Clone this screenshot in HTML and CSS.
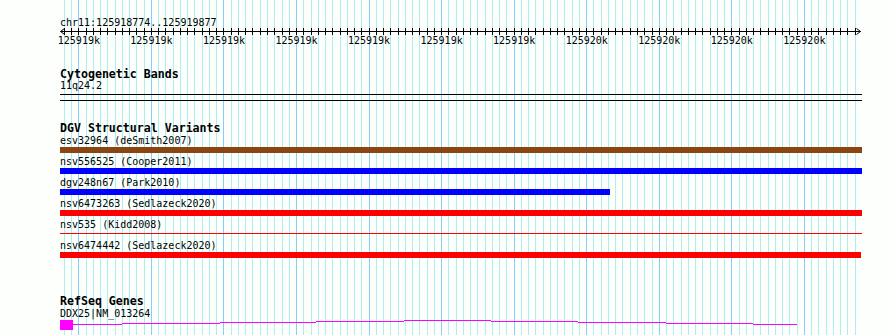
FILE: index.html
```html
<!DOCTYPE html>
<html lang="en">
<head>
  <meta charset="UTF-8">
  <meta name="viewport" content="width=device-width, initial-scale=1.0">
  <title>chr11:125918774..125919877</title>
  <link rel="stylesheet" href="styles.css">
</head>
<body>
  <div class="browser">
    <svg class="grid" id="grid" width="890" height="335"></svg>
    <div class="tracks">
      <div class="locus">chr11:125918774..125919877</div>
      <svg class="ruler" id="ruler" width="802" height="20"></svg>

      <div class="track">
        <h2 class="track-title cyto-title">Cytogenetic Bands</h2>
        <div class="band-label">11q24.2</div>
        <div class="band"></div>
      </div>

      <div class="track">
        <h2 class="track-title dgv-title">DGV Structural Variants</h2>
        <div class="sv">
          <div class="sv-label">esv32964 (deSmith2007)</div>
          <div class="bar brown"></div>
        </div>
        <div class="sv">
          <div class="sv-label">nsv556525 (Cooper2011)</div>
          <div class="bar blue"></div>
        </div>
        <div class="sv">
          <div class="sv-label">dgv248n67 (Park2010)</div>
          <div class="bar blue" style="width: 550px"></div>
        </div>
        <div class="sv">
          <div class="sv-label">nsv6473263 (Sedlazeck2020)</div>
          <div class="bar red"></div>
        </div>
        <div class="sv">
          <div class="sv-label">nsv535 (Kidd2008)</div>
          <div class="bar thin"></div>
        </div>
        <div class="sv">
          <div class="sv-label">nsv6474442 (Sedlazeck2020)</div>
          <div class="bar red" style="width: 801px"></div>
        </div>
      </div>

      <div class="track">
        <h2 class="track-title gene-title">RefSeq Genes</h2>
        <div class="gene-label">DDX25|NM_013264</div>
        <svg class="gene" width="802" height="16">
          <rect x="0" y="1" width="13" height="10" fill="#ff00ff"></rect>
          <path d="M13 5.5H62M62 4.5H160M160 3.5H256M256 2.5H344M344 1.5H431M431 2.5H518M518 3.5H606M606 4.5H693M693 5.5H737" stroke="#ff00ff" stroke-width="1" fill="none"></path>
        </svg>
      </div>
    </div>
  </div>
  <script>
    (function () {
      // 60px = 125918774, 0.7255 px per bp
      var start = 125918774, x0 = 60, scale = 0.7255;
      var ns = 'http://www.w3.org/2000/svg';
      var grid = document.getElementById('grid');
      var ruler = document.getElementById('ruler');

      function px(bp) {
        return x0 + (bp - start) * scale;
      }
      function el(parent, name, attrs) {
        var node = document.createElementNS(ns, name);
        for (var k in attrs) node.setAttribute(k, attrs[k]);
        parent.appendChild(node);
        return node;
      }

      // axis + arrows (ruler svg starts at x=60)
      el(ruler, 'path', {
        d: 'M0.5 3.5H800.5M4.5 0.5L0.5 3.5L4.5 6.5M796.5 0.5L800.5 3.5L796.5 6.5',
        stroke: '#000', fill: 'none'
      });

      for (var bp = 125918780; bp <= 125919870; bp += 10) {
        var x = Math.floor(px(bp)) + 0.5;
        var major = bp % 100 === 0;
        el(grid, 'line', {
          x1: x, x2: x, y1: 0, y2: 335,
          stroke: major ? '#87cefa' : '#afeeee'
        });
        el(ruler, 'line', { x1: x - x0, x2: x - x0, y1: 0, y2: 7, stroke: '#000' });
        if (major) {
          var t = el(ruler, 'text', { x: px(bp) - x0, y: 16, 'text-anchor': 'middle' });
          t.textContent = Math.round(bp / 1000) + 'k';
        }
      }
    })();
  </script>
</body>
</html>
```

FILE: styles.css
```css
body {
  margin: 0;
  background: #fcfffc;
  font-family: "DejaVu Sans Mono", monospace;
  font-size: 10px;
  color: #000;
}
.browser {
  position: relative;
  width: 890px;
  height: 335px;
  overflow: hidden;
}
.grid {
  position: absolute;
  top: 0;
  left: 0;
}
.tracks {
  position: relative;
  width: 802px;
  margin-left: 60px;
}
.locus {
  height: 28px;
  box-sizing: border-box;
  padding-top: 16.5px;
  line-height: 12px;
}
.ruler {
  display: block;
  overflow: visible;
  font-family: "DejaVu Sans Mono", monospace;
  font-size: 10px;
}
.track-title {
  margin: 0;
  font-size: 11.6px;
  font-weight: bold;
  line-height: 12px;
}
.cyto-title {
  margin-top: 20px;
}
.band-label {
  line-height: 12px;
}
.band {
  height: 5px;
  margin-top: 2px;
  border-top: 1px solid #000;
  border-bottom: 1px solid #000;
}
.dgv-title {
  margin-top: 21px;
}
.sv {
  padding-bottom: 2px;
}
.sv-label {
  line-height: 13px;
  white-space: nowrap;
}
.bar {
  width: 802px;
  height: 6px;
}
.bar.thin {
  background: linear-gradient(transparent 2px, #ff0000 2px, #ff0000 3px, transparent 3px);
}
.brown {
  background: #8b4513;
}
.blue {
  background: #0000ff;
}
.red {
  background: #ff0000;
}
.gene-title {
  margin-top: 35px;
  line-height: 13px;
}
.gene-label {
  line-height: 11px;
}
.gene {
  display: block;
  shape-rendering: crispEdges;
}
```
